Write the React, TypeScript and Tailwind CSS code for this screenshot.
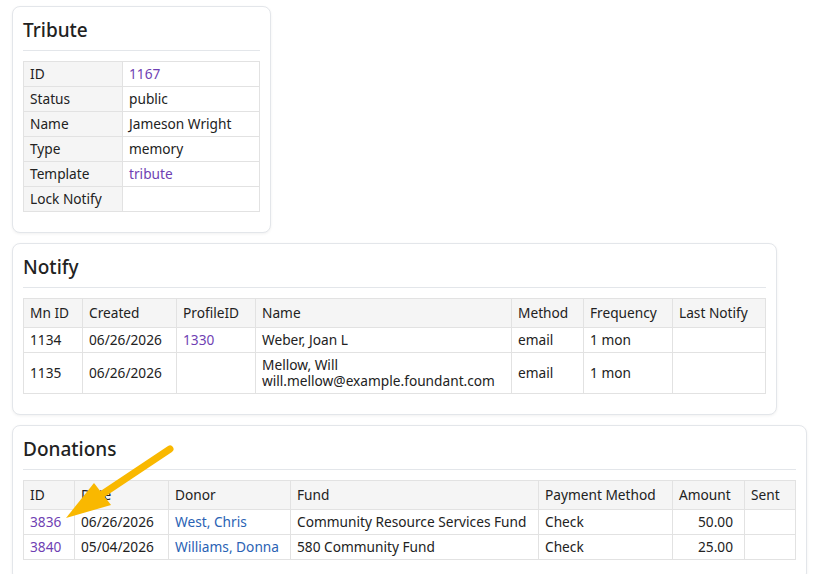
import React from "react";

const font = { fontFamily: '"Noto Sans", "Open Sans", Arial, sans-serif' };

const Card: React.FC<{ title: string; children: React.ReactNode }> = ({ title, children }) => (
  <div className="w-fit rounded-lg border border-[#e3e6ea] bg-white px-[10px] pt-[12px] pb-[20px] shadow-[0_1px_3px_rgba(0,0,0,0.06)]">
    <h2 className="border-b border-[#e3e6ea] pb-[9px] text-[19px] leading-[22px] font-medium text-[#222]">
      {title}
    </h2>
    <div className="mt-[10px]">{children}</div>
  </div>
);

const td = "border border-[#e2e2e2] px-[6px] py-[4px] leading-[16px] align-middle";
const th = "border border-[#e2e2e2] bg-[#f5f5f5] px-[6px] py-[6px] leading-[16px] text-left font-normal";

function Tribute() {
  const rows: [string, React.ReactNode][] = [
    ["ID", <a className="text-[#6f3fb3]">1167</a>],
    ["Status", "public"],
    ["Name", "Jameson Wright"],
    ["Type", "memory"],
    ["Template", <a className="text-[#6f3fb3]">tribute</a>],
    ["Lock Notify", ""],
  ];
  return (
    <Card title="Tribute">
      <table className="table-fixed border-collapse w-[236px]">
        <colgroup>
          <col className="w-[99px]" />
          <col className="w-[137px]" />
        </colgroup>
        <tbody>
          {rows.map(([k, v]) => (
            <tr key={k}>
              <td className={`${td} bg-[#f5f5f5]`}>{k}</td>
              <td className={td}>{v}</td>
            </tr>
          ))}
        </tbody>
      </table>
    </Card>
  );
}

function Notify() {
  const widths = ["w-[59px]", "w-[94px]", "w-[79px]", "w-[256px]", "w-[72px]", "w-[89px]", "w-[93px]"];
  const heads = ["Mn ID", "Created", "ProfileID", "Name", "Method", "Frequency", "Last Notify"];
  return (
    <Card title="Notify">
      <table className="table-fixed border-collapse w-[742px]">
        <colgroup>
          {widths.map((w, i) => (
            <col key={i} className={w} />
          ))}
        </colgroup>
        <thead>
          <tr>
            {heads.map((h) => (
              <th key={h} className={th}>{h}</th>
            ))}
          </tr>
        </thead>
        <tbody>
          <tr>
            <td className={td}>1134</td>
            <td className={td}>06/26/2026</td>
            <td className={td}><a className="text-[#6f3fb3]">1330</a></td>
            <td className={td}>Weber, Joan L</td>
            <td className={td}>email</td>
            <td className={td}>1 mon</td>
            <td className={td}></td>
          </tr>
          <tr>
            <td className={td}>1135</td>
            <td className={td}>06/26/2026</td>
            <td className={td}></td>
            <td className={td}>
              <div>Mellow, Will</div>
              <div>will.mellow@example.foundant.com</div>
            </td>
            <td className={td}>email</td>
            <td className={td}>1 mon</td>
            <td className={td}></td>
          </tr>
        </tbody>
      </table>
    </Card>
  );
}

function Donations() {
  const widths = ["w-[51px]", "w-[94px]", "w-[122px]", "w-[248px]", "w-[134px]", "w-[72px]", "w-[51px]"];
  const heads = ["ID", "Date", "Donor", "Fund", "Payment Method", "Amount", "Sent"];
  const rows = [
    ["3836", "06/26/2026", "West, Chris", "Community Resource Services Fund", "Check", "50.00"],
    ["3840", "05/04/2026", "Williams, Donna", "580 Community Fund", "Check", "25.00"],
  ];
  return (
    <Card title="Donations">
      <table className="table-fixed border-collapse w-[772px]">
        <colgroup>
          {widths.map((w, i) => (
            <col key={i} className={w} />
          ))}
        </colgroup>
        <thead>
          <tr>
            {heads.map((h) => (
              <th key={h} className={th}>{h}</th>
            ))}
          </tr>
        </thead>
        <tbody>
          {rows.map((r) => (
            <tr key={r[0]}>
              <td className={td}><a className="text-[#6f3fb3]">{r[0]}</a></td>
              <td className={td}>{r[1]}</td>
              <td className={td}><a className="text-[#2a62b4]">{r[2]}</a></td>
              <td className={td}>{r[3]}</td>
              <td className={td}>{r[4]}</td>
              <td className={`${td} text-right pr-[11px]`}>{r[5]}</td>
              <td className={td}></td>
            </tr>
          ))}
        </tbody>
      </table>
    </Card>
  );
}

export default function App() {
  return (
    <div className="relative min-h-[574px] bg-white text-[13.7px] text-[#222]" style={font}>
      <div className="flex flex-col gap-[10px] pl-[12px] pt-[6px]">
        <Tribute />
        <Notify />
        <Donations />
      </div>
      {/* highlight arrow */}
      <svg className="pointer-events-none absolute left-0 top-0" width="832" height="574">
        <line x1="170" y1="449" x2="98" y2="497" stroke="#f9b800" strokeWidth="7" strokeLinecap="round" />
        <polygon points="66,518 94,483 111,505" fill="#f9b800" />
      </svg>
    </div>
  );
}
